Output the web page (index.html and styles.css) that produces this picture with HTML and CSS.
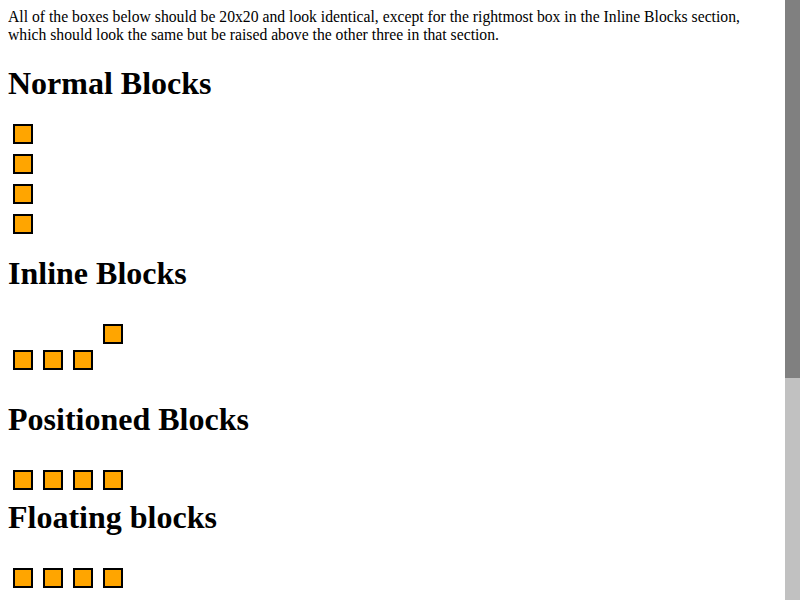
FILE: index.html
```html
<!DOCTYPE html>
<html>
<head>
<meta charset="utf-8">
<title>Box test</title>
<link rel="stylesheet" href="styles.css">
</head>
<body>
<div class="intro">All of the boxes below should be 20x20 and look identical, except for the rightmost box in the Inline Blocks section, which should look the same but be raised above the other three in that section.</div>

<h1>Normal Blocks</h1>
<div class="normal">
  <div class="box"></div>
  <div class="box"></div>
  <div class="box"></div>
  <div class="box"></div>
</div>

<h1>Inline Blocks</h1>
<div class="inline-row">
  <div class="box"></div>
  <div class="box"></div>
  <div class="box"></div>
  <div class="box raised"></div>
</div>

<h1>Positioned Blocks</h1>
<div class="positioned">
  <div class="pos-row">
    <div class="box"></div>
    <div class="box"></div>
    <div class="box"></div>
    <div class="box"></div>
  </div>
</div>

<h1>Floating blocks</h1>
<div class="floating">
  <div class="box"></div>
  <div class="box"></div>
  <div class="box"></div>
  <div class="box"></div>
</div>
<div class="spacer"></div>

<div class="scrollbar"><div class="thumb"></div></div>
</body>
</html>
```
FILE: styles.css
```css
body {
  margin: 8px 23px 8px 8px;
  font-family: "Liberation Serif", "Times New Roman", serif;
  font-size: 16px;
  color: #000;
  background: #fff;
}

.intro {
  font-size: 15.7px;
  line-height: 18px;
}

h1 {
  font-size: 32px;
  font-weight: bold;
  margin: 21.44px 0;
}

.box {
  width: 16px;
  height: 16px;
  border: 2px solid #000;
  background: #ffa500;
  margin: 10px 5px;
}

.normal .box {
  display: block;
}

.inline-row {
  display: flex;
  align-items: flex-end;
  padding-top: 10px;
  padding-bottom: 5px;
}

.inline-row .box {
  margin: 0 5px 5px;
}

.inline-row .raised {
  margin-bottom: 31px;
}

.positioned {
  height: 18px;
}

.pos-row {
  display: flex;
}

.floating {
  display: flex;
}

.spacer {
  height: 330px;
}

.scrollbar {
  position: fixed;
  top: 0;
  right: 0;
  width: 15px;
  height: 600px;
  background: #c1c1c1;
}

.thumb {
  height: 378px;
  background: #808080;
}
```
